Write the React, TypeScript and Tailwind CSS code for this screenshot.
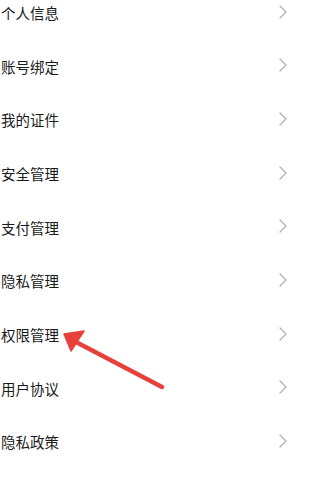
const ITEMS = ['个人信息', '账号绑定', '我的证件', '安全管理', '支付管理', '隐私管理', '权限管理', '用户协议', '隐私政策'];

function Chevron() {
  return (
    <svg width="8" height="14" viewBox="0 0 8 14" className="-mt-[2px]" fill="none">
      <polyline points="1,1 7,7 1,13" stroke="#b0b0b0" strokeWidth="1.3" strokeLinecap="round" strokeLinejoin="round" />
    </svg>
  );
}

export default function App() {
  return (
    <div
      className="relative w-[293px] h-[481px] overflow-hidden bg-white"
      style={{ fontFamily: '"Noto Sans CJK SC", "Noto Sans", sans-serif' }}
    >
      <div className="-mt-[14px] flex flex-col">
        {ITEMS.map((label) => (
          <div key={label} className="flex h-[53.67px] items-center justify-between pl-[1px] pr-[6px]">
            <span className="text-[14.5px] text-[#1a1a1a]">{label}</span>
            <Chevron />
          </div>
        ))}
      </div>

      {/* red arrow pointing at 权限管理 */}
      <svg className="pointer-events-none absolute left-0 top-0" width="293" height="481" viewBox="0 0 293 481">
        <line x1="76" y1="342" x2="162" y2="387" stroke="#e8413b" strokeWidth="4.5" strokeLinecap="round" />
        <polygon points="64,334 84,331 71,351" fill="#e8413b" stroke="#e8413b" strokeWidth="1.5" strokeLinejoin="round" />
      </svg>
    </div>
  );
}
